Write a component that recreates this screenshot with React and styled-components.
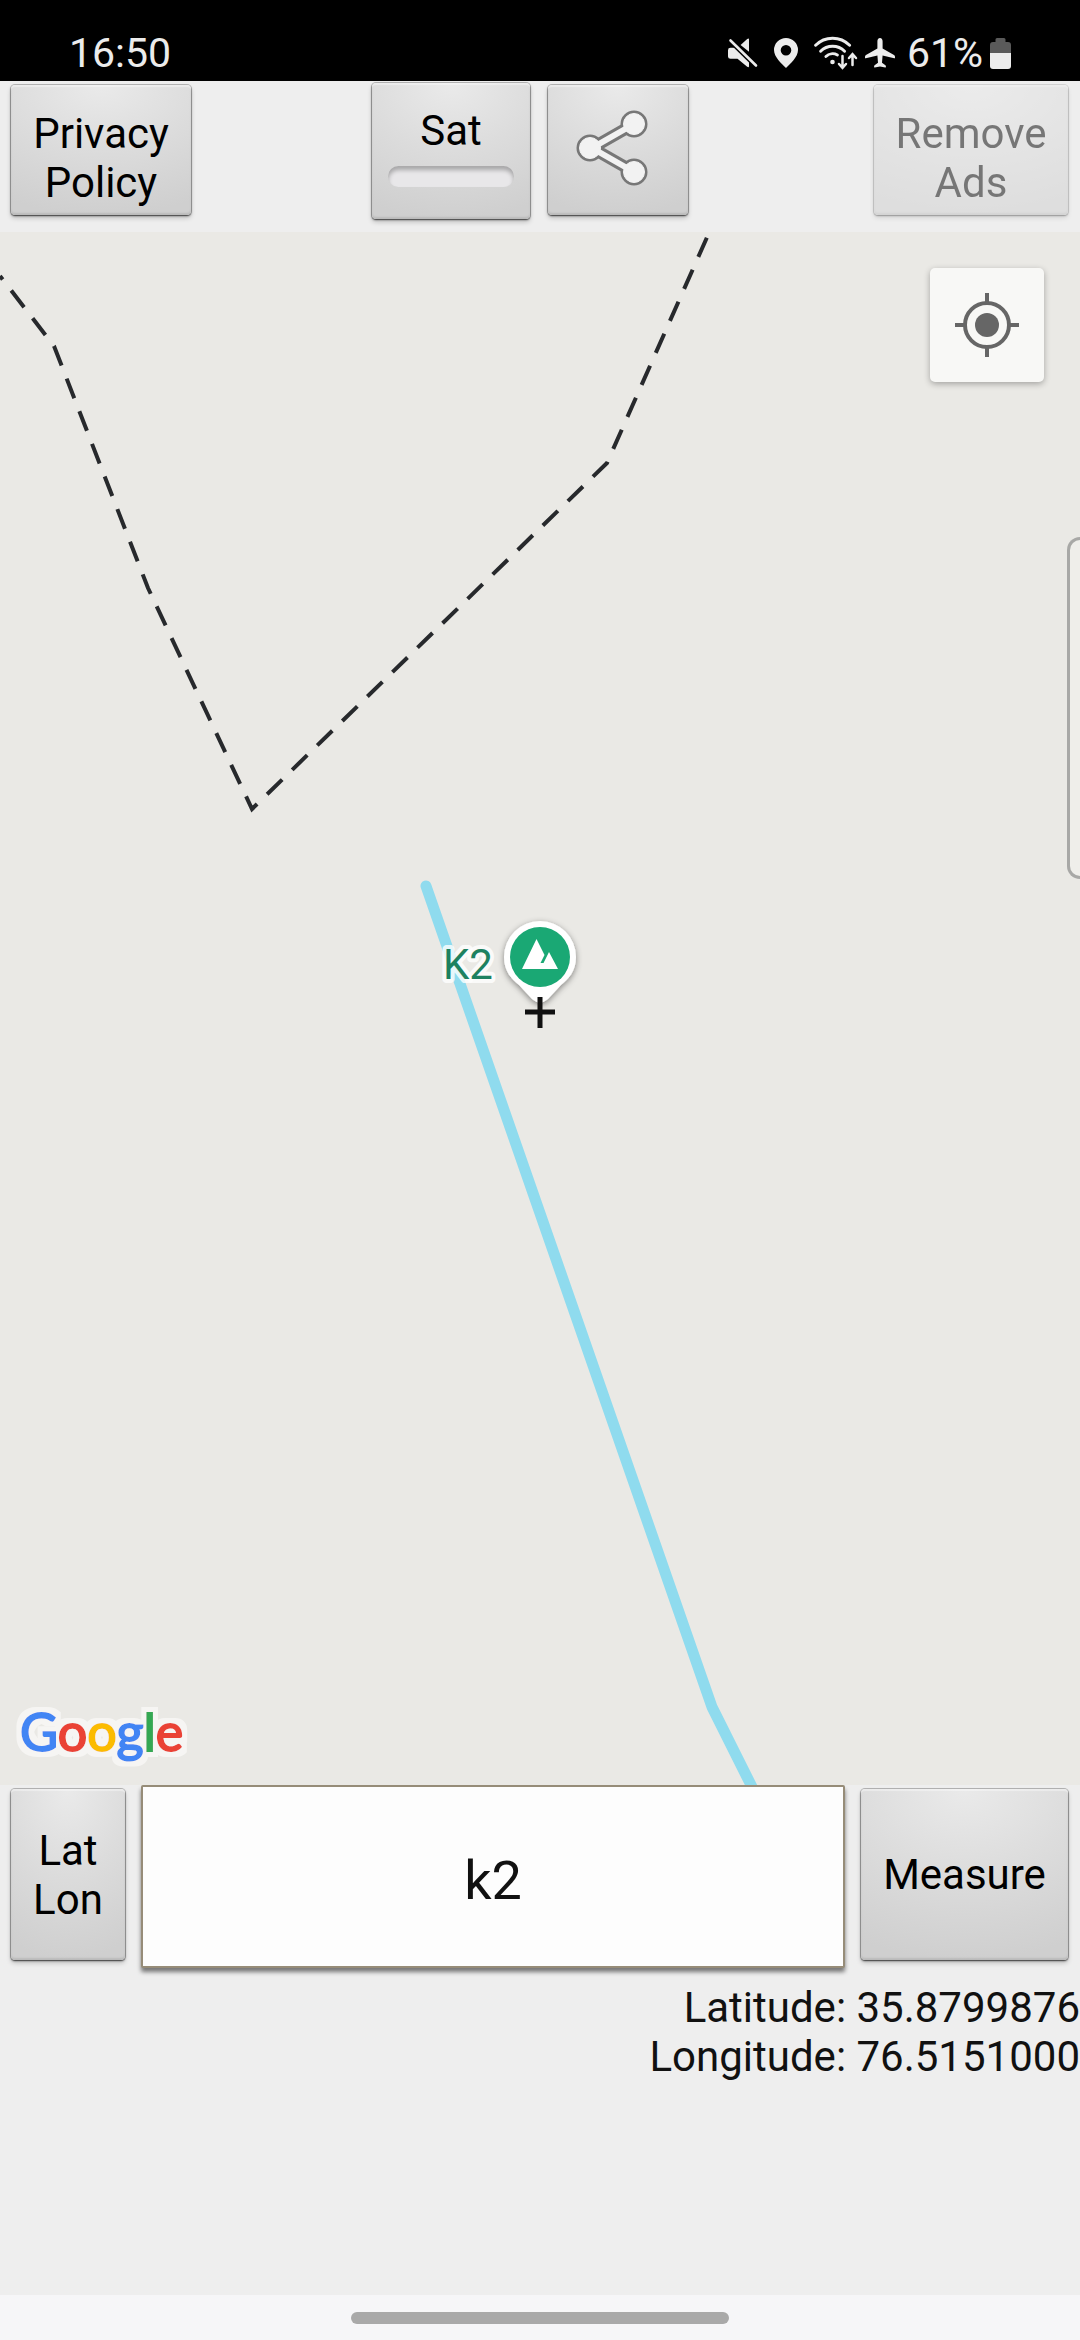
import React, { useState } from 'react'
import styled, { createGlobalStyle, css } from 'styled-components'

const GlobalStyle = createGlobalStyle`
    * {
        box-sizing: border-box;
    }
    body {
        margin: 0;
        background: #eee;
        font-family: Roboto, sans-serif;
        font-size: 42px;
        line-height: 49px;
        color: #111;
    }
`;

function MuteIcon() {
    return (
        <svg width="30" height="30" viewBox="0 0 30 30" fill="#ececec">
            <path d="M21 1.2v12.6L12.6 6.9 19.2 1.1Q21-.2 21 1.2z"/>
            <path d="M2.5 9.8H7L21 22.6v5.6q0 1.8-1.8.6L9.5 20.8H2.5Q0 20.8 0 18.6v-6.4q0-2.4 2.5-2.4z"/>
            <path d="M2.5 2.5l25.5 25" stroke="#000" strokeWidth="5.5"/>
            <path d="M2.5 2.5l25.5 25" stroke="#ececec" strokeWidth="2.6" strokeLinecap="round"/>
        </svg>
    )
}

function PlaceIcon() {
    return (
        <svg width="24" height="30" viewBox="0 0 24 30" fill="#ececec">
            <path fillRule="evenodd" d="M12 0a12 12 0 0 1 12 12c0 7-7.500 13.500-12 18C7.500 25.500 0 19 0 12A12 12 0 0 1 12 0zm0 7a5.300 5.300 0 1 0 0 10.600A5.300 5.300 0 0 0 12 7z"/>
        </svg>
    )
}

function WifiIcon() {
    return (
        <svg width="44" height="34" viewBox="0 0 44 34" fill="none" stroke="#ececec" strokeWidth="2.9" strokeLinecap="round">
            <path d="M1.600 9.300a24 24 0 0 1 34 0"/>
            <path d="M6.600 15.200a17 17 0 0 1 24 0"/>
            <path d="M11.900 20.500a9.800 9.800 0 0 1 11.500-1.500"/>
            <circle cx="18.500" cy="26" r="2.300" fill="#ececec" stroke="none"/>
            <path strokeWidth="2.500" d="M28.500 20v11M25 28l3.500 3.800L32 28M38.500 29V18.500M35 22l3.500-3.800L42 22"/>
        </svg>
    )
}

function PlaneIcon() {
    return (
        <svg width="30" height="30" viewBox="0 0 30 30" fill="#ececec">
            <path d="M15 0c1.700 0 2.600 1.600 2.600 3.400v7l11.400 6.600q1 .6 1 1.700v1.100q0 .7-.8.500l-11.600-2.800-.6 7.200 3.400 2.600q.5.400.5 1v.8q0 .6-.6.400L15 28.600l-5.300.9q-.6.200-.6-.4v-.8q0-.6.500-1l3.400-2.600-.6-7.200L.8 20.300q-.8.200-.8-.5v-1.100q0-1.100 1-1.700l11.400-6.600v-7C12.400 1.600 13.300 0 15 0z"/>
        </svg>
    )
}

function BatteryIcon() {
    return (
        <svg width="21" height="31" viewBox="0 0 21 31">
            <path fill="#5a5a5a" d="M7 0h7q1.500 0 1.500 1.500V4H18q3 0 3 3v8H0V7q0-3 3-3h2.500V1.500Q5.500 0 7 0z"/>
            <path fill="#ececec" d="M0 15h21v13q0 3-3 3H3q-3 0-3-3z"/>
        </svg>
    )
}

function ShareIcon() {
    const shape = (
        <>
            <circle cx="20" cy="46" r="10.500"/>
            <circle cx="64" cy="22" r="10.500"/>
            <circle cx="64" cy="70" r="10.500"/>
        </>
    )
    return (
        <svg width="96" height="96" viewBox="0 0 96 96">
            <g fill="#777" stroke="#777" strokeWidth="6">
                {shape}
                <path d="M64 22L22 46l42 24" fill="none" strokeWidth="12"/>
            </g>
            <g fill="#f2f2f2" stroke="#f2f2f2" strokeWidth="1">
                {shape}
                <path d="M64 22L22 46l42 24" fill="none" strokeWidth="6"/>
            </g>
        </svg>
    )
}

function LocateIcon() {
    return (
        <svg width="64" height="64" viewBox="0 0 64 64" fill="#666">
            <circle cx="32" cy="32" r="22" fill="none" stroke="#666" strokeWidth="4"/>
            <circle cx="32" cy="32" r="12"/>
            <path d="M30 0h4v9h-4zM30 55h4v9h-4zM0 30h9v4H0zM55 30h9v4h-9z"/>
        </svg>
    )
}

function GoogleLogo() {
    return (
        <svg width="184" height="74" viewBox="0 0 184 74" role="img" aria-label="Google">
            <filter id="halo" x="-10%" y="-10%" width="120%" height="120%">
                <feMorphology in="SourceAlpha" operator="dilate" radius="5" result="grown"/>
                <feFlood floodColor="#f6f5f3"/>
                <feComposite in2="grown" operator="in"/>
                <feMerge>
                    <feMergeNode/>
                    <feMergeNode in="SourceGraphic"/>
                </feMerge>
            </filter>
            <text x="7" y="50" fontFamily="Lato, sans-serif" fontSize="52" strokeWidth="2" filter="url(#halo)">
                <tspan fill="#4285f4" stroke="#4285f4">G</tspan>
                <tspan fill="#ea4335" stroke="#ea4335">o</tspan>
                <tspan fill="#fbbc05" stroke="#fbbc05">o</tspan>
                <tspan fill="#4285f4" stroke="#4285f4">g</tspan>
                <tspan fill="#34a853" stroke="#34a853">l</tspan>
                <tspan fill="#ea4335" stroke="#ea4335">e</tspan>
            </text>
        </svg>
    )
}

// drawn around the map centre, so it is cropped evenly on other screens
function MapCanvas() {
    return (
        <MapDrawing viewBox="0 0 1080 1553" preserveAspectRatio="xMidYMid slice">
            <defs>
                <filter id="pinShadow" x="-30%" y="-30%" width="160%" height="160%">
                    <feDropShadow dx="0" dy="2" stdDeviation="3" floodOpacity="0.450"/>
                </filter>
            </defs>

            {/* border */}
            <path d="M0 44L54 114L148 356L252 577L607 231L712-6" fill="none" stroke="#27292c" strokeWidth="4" strokeDasharray="21 14" strokeDashoffset="16.600"/>

            {/* river */}
            <path d="M426 654L712 1475L761 1573" fill="none" stroke="#8fdbee" strokeWidth="11" strokeLinecap="round" strokeLinejoin="round"/>

            <text x="443" y="747" fontSize="42" fill="#1d8160" stroke="#fff" strokeOpacity="0.800" strokeWidth="8" strokeLinejoin="round" paintOrder="stroke">K2</text>

            {/* summit pin */}
            <path d="M540 689a36 36 0 0 1 36 36c0 15-8 22-15 28l-13 14q-8 7-16 0l-13-14c-7-6-15-13-15-28a36 36 0 0 1 36-36z" fill="#fff" filter="url(#pinShadow)"/>
            <circle cx="540" cy="725" r="30" fill="#1aa874"/>
            <path d="M522 737l14.500-30 8 16-4 8h3l5.500-11 9 17z" fill="#fff"/>

            <path d="M525 780h30M540 765v31" stroke="#111" strokeWidth="5"/>
        </MapDrawing>
    )
}

export default function App() {
    const [query, setQuery] = useState('k2');
    const [satellite, setSatellite] = useState(false);

    return (
        <Screen>
            <GlobalStyle/>
            <StatusBar>
                <span>16:50</span>
                <StatusIcons>
                    <MuteIcon/>
                    <PlaceIcon/>
                    <WifiIcon/>
                    <PlaneIcon/>
                    <Battery>
                        <span>61%</span>
                        <BatteryIcon/>
                    </Battery>
                </StatusIcons>
            </StatusBar>

            <Toolbar>
                <TopButton $width={180}>Privacy Policy</TopButton>
                <ToolGroup>
                    <ToggleButton aria-pressed={satellite} onClick={() => setSatellite(!satellite)}>
                        Sat
                        <Indicator $on={satellite}/>
                    </ToggleButton>
                    <IconButton aria-label="Share">
                        <ShareIcon/>
                    </IconButton>
                </ToolGroup>
                <TopButton $width={194} disabled>Remove Ads</TopButton>
            </Toolbar>

            <Map>
                <MapCanvas/>
                <LocateButton aria-label="My location">
                    <LocateIcon/>
                </LocateButton>
                <EdgeHandle/>
                <Logo>
                    <GoogleLogo/>
                </Logo>
            </Map>

            <Panel>
                <SearchRow>
                    <SideButton $width={114}>Lat Lon</SideButton>
                    <SearchInput aria-label="Place" value={query} onChange={(e) => setQuery(e.target.value)}/>
                    <SideButton $width={207}>Measure</SideButton>
                </SearchRow>
                <Coordinates>
                    <div>Latitude: 35.8799876</div>
                    <div>Longitude: 76.5151000</div>
                </Coordinates>
            </Panel>

            <NavBar>
                <NavHandle/>
            </NavBar>
        </Screen>
    )
}

const Screen = styled.div`
    display: flex;
    flex-direction: column;
    min-height: 100vh;
`;

const StatusBar = styled.header`
    display: flex;
    justify-content: space-between;
    align-items: center;
    height: 81px;
    padding: 25px 69px 0;
    background: #000;
    color: #ececec;
    font-size: 41px;
`;

const StatusIcons = styled.div`
    display: flex;
    align-items: center;
    gap: 16px;
    svg {
        display: block;
    }
    svg + svg:nth-of-type(4) {
        margin-left: -9px;
    }
`;

const Battery = styled.div`
    display: flex;
    align-items: center;
    gap: 7px;
    margin-left: -4px;
`;

const Toolbar = styled.div`
    display: flex;
    justify-content: space-between;
    align-items: flex-start;
    padding: 2px 12px 13px 11px;
    background: #eee;
`;

const ToolGroup = styled.div`
    display: flex;
    align-items: flex-start;
    gap: 18px;
    margin-right: 5px;
`;

const raised = css`
    border: 0;
    border-radius: 4px;
    background: radial-gradient(ellipse 110% 100% at 50% 0, #eaeaea, #dcdcdc 50%, #cfcfcf);
    box-shadow:
        0 0 0 1px rgba(0, 0, 0, 0.22),
        0 1px 2px rgba(0, 0, 0, 0.6),
        0 3px 5px rgba(0, 0, 0, 0.2),
        inset 0 2px 1px rgba(255, 255, 255, 0.4),
        inset 0 -2px 2px rgba(0, 0, 0, 0.1);
    font: inherit;
    color: #000;
    &:disabled {
        opacity: 0.5;
    }
`;

const TopButton = styled.button`
    ${raised}
    width: ${(p) => p.$width}px;
    height: 130px;
    margin-top: 2px;
    padding: 16px 16px 0;
`;

const ToggleButton = styled.button`
    ${raised}
    display: flex;
    flex-direction: column;
    align-items: center;
    gap: 11px;
    width: 158px;
    height: 136px;
    padding: 23px 16px 0;
`;

const Indicator = styled.span`
    width: 126px;
    height: 21px;
    border-radius: 11px;
    background: ${(p) => (p.$on ? '#33b5e5' : '#e8e7e9')};
    box-shadow: inset 0 4px 4px rgba(0, 0, 0, 0.28);
`;

const IconButton = styled.button`
    ${raised}
    display: flex;
    justify-content: center;
    align-items: center;
    width: 140px;
    height: 130px;
    margin-top: 2px;
    padding: 0;
`;

const Map = styled.main`
    position: relative;
    flex: 1;
    min-height: 600px;
    overflow: hidden;
    background: #eae9e5;
`;

const MapDrawing = styled.svg`
    position: absolute;
    width: 100%;
    height: 100%;
`;

const LocateButton = styled.button`
    position: absolute;
    top: 36px;
    right: 36px;
    display: flex;
    justify-content: center;
    align-items: center;
    width: 114px;
    height: 114px;
    padding: 0;
    border: 0;
    border-radius: 5px;
    background: #f8f8f6;
    box-shadow: 0 2px 6px rgba(0, 0, 0, 0.3);
`;

const EdgeHandle = styled.div`
    position: absolute;
    top: 305px;
    right: 0;
    width: 13px;
    height: 342px;
    border: 3px solid #a8a8a6;
    border-right: 0;
    border-radius: 14px 0 0 14px;
    background: #efeeea;
`;

const Logo = styled.div`
    position: absolute;
    left: 13px;
    bottom: 10px;
    svg {
        display: block;
    }
`;

const Panel = styled.section`
    min-height: 510px;
    background: #eee;
`;

const SearchRow = styled.div`
    display: flex;
    align-items: flex-start;
    gap: 16px;
    padding: 0 12px 0 11px;
`;

const SideButton = styled.button`
    ${raised}
    width: ${(p) => p.$width}px;
    height: 171px;
    margin-top: 4px;
    padding: 0 16px;
`;

const SearchInput = styled.input`
    flex: 1;
    min-width: 0;
    height: 183px;
    padding: 8px 16px 0;
    border: 2px solid #968c78;
    border-radius: 2px;
    background: #fdfdfd;
    box-shadow: 0 4px 4px rgba(0, 0, 0, 0.5);
    font: inherit;
    font-size: 54px;
    text-align: center;
    color: #111;
    outline: 0;
`;

const Coordinates = styled.div`
    padding-top: 15px;
    text-align: right;
`;

const NavBar = styled.footer`
    display: flex;
    justify-content: center;
    height: 45px;
    padding-top: 17px;
    background: #f6f6f8;
`;

const NavHandle = styled.div`
    width: 35%;
    height: 12px;
    border-radius: 6px;
    background: #a9a9a9;
`;
